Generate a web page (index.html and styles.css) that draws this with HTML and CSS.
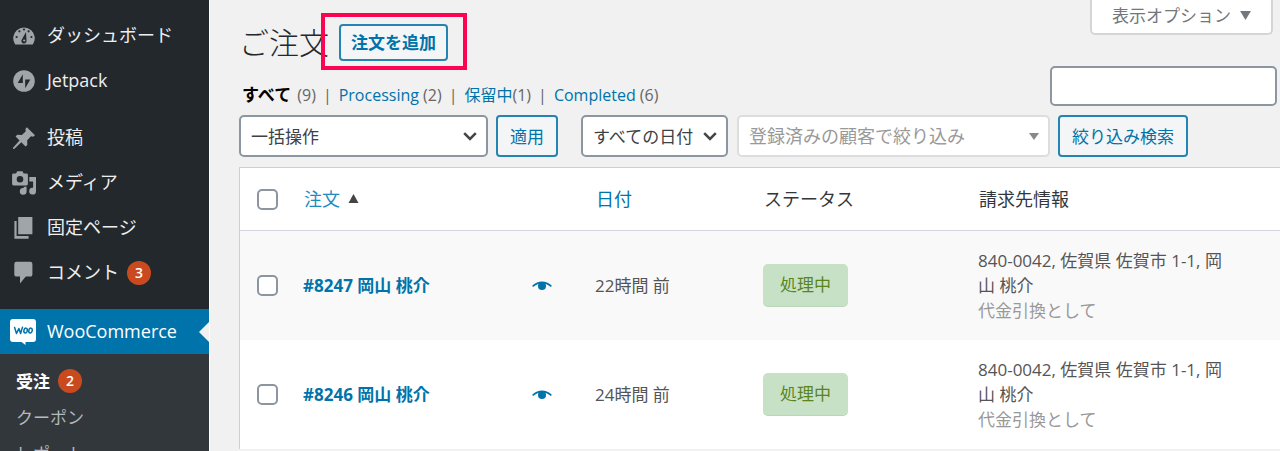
FILE: index.html
```html
<!DOCTYPE html>
<html lang="ja">
<head>
<meta charset="utf-8">
<meta name="viewport" content="width=device-width, initial-scale=1">
<title>ご注文</title>
<link rel="stylesheet" href="styles.css">
</head>
<body>
<div class="layout">
  <nav class="sidebar" aria-label="管理メニュー">
    <ul class="menu">
      <li><a class="menu-link" href="#"><svg class="icon" viewBox="0 0 24 24"><path fill="currentColor" fill-rule="evenodd" d="M3.200 20.500A10.800 10.800 0 1 1 20.800 20.500Z"/><g fill="#23282d"><circle cx="12" cy="5.500" r="1.100"/><circle cx="7.400" cy="7.300" r="1.100"/><circle cx="16.600" cy="7.300" r="1.100"/><circle cx="4.600" cy="13" r="1.100"/><circle cx="19.400" cy="13" r="1.100"/><path d="M14 8 14.500 16.300A2.600 2.600 0 1 1 10 15.200Z"/></g><circle cx="12.200" cy="16.500" r="1.100" fill="currentColor"/></svg><span>ダッシュボード</span></a></li>
      <li><a class="menu-link" href="#"><svg class="icon" viewBox="0 0 24 24"><circle cx="12" cy="12" r="10.800" fill="currentColor"/><path fill="#23282d" d="M10.800 5.200V13.900H5.700ZM13.200 10.400H18.300L13.200 19.300Z"/></svg><span>Jetpack</span></a></li>
      <li class="group-start"><a class="menu-link" href="#"><svg class="icon" viewBox="0 0 24 24"><path fill="currentColor" d="M14.900 1.200 23 9.200 21.200 10.700 19 10.300 15.200 14.200 15.300 18.900 13.500 20.400 9.300 16.300 2.200 23 .8 22.800 1.200 21.400 7.500 14.400 3.600 10.500 5.200 8.800 9.900 8.900 13.800 5.200 13.400 2.900Z"/></svg><span>投稿</span></a></li>
      <li><a class="menu-link" href="#"><svg class="icon" viewBox="0 0 24 24"><path fill="currentColor" fill-rule="evenodd" d="M1.500 2.500H4L5.200.3H10.500L11.700 2.500H14.500A1.400 1.400 0 0 1 15.900 3.900V13A1.400 1.400 0 0 1 14.500 14.400H1.500A1.400 1.400 0 0 1 .1 13V3.900A1.400 1.400 0 0 1 1.500 2.500ZM8 5A3.300 3.300 0 1 0 8 11.600 3.300 3.300 0 0 0 8 5Z"/><path fill="currentColor" d="M17.300 6H24V20.200A3.400 3.400 0 1 1 21.100 16.800V10.500H17.300ZM14.600 15.800V20.300A3.400 3.400 0 1 1 11.700 17V15.800Z"/></svg><span>メディア</span></a></li>
      <li><a class="menu-link" href="#"><svg class="icon" viewBox="0 0 24 24"><path fill="currentColor" d="M6.200 1H20.400V18.300H6.200ZM2.400 5H4.600V20.100H16.600V22.700H2.400Z"/></svg><span>固定ページ</span></a></li>
      <li><a class="menu-link" href="#"><svg class="icon" viewBox="0 0 24 24"><path fill="currentColor" d="M4.500.8H18.200A2.200 2.200 0 0 1 20.400 3V13.400A2.200 2.200 0 0 1 18.200 15.600H13.800L8 22.500V15.600H4.500A2.200 2.200 0 0 1 2.300 13.400V3A2.200 2.200 0 0 1 4.500.8Z"/></svg><span>コメント</span><span class="count">3</span></a></li>
      <li class="group-start current"><a class="menu-link" href="#"><svg class="icon woo" viewBox="0 0 26 26"><path fill="#fff" d="M3 0H23A3 3 0 0 1 26 3V20A3 3 0 0 1 23 23H15.500V26L11.500 23H3A3 3 0 0 1 0 20V3A3 3 0 0 1 3 0Z"/><g fill="none" stroke="#0073aa" stroke-width="1.500" stroke-linejoin="round" stroke-linecap="round"><path d="M4.600 8.500 6.500 14.500 8.900 9.500 10.600 14.500Q11.500 11 12.500 8.200"/><ellipse cx="15.600" cy="11.600" rx="1.700" ry="2.500" transform="rotate(12 15.600 11.600)"/><ellipse cx="20.500" cy="11.600" rx="1.700" ry="2.500" transform="rotate(12 20.500 11.600)"/></g></svg><span>WooCommerce</span></a>
        <ul class="submenu">
          <li><a class="submenu-link active" href="#">受注<span class="count">2</span></a></li>
          <li><a class="submenu-link" href="#">クーポン</a></li>
          <li><a class="submenu-link" href="#">レポート</a></li>
        </ul>
      </li>
    </ul>
  </nav>

  <main class="content">
    <header class="page-head">
      <div class="title-group">
        <h1>ご注文</h1>
        <span class="highlight"><button class="button add" type="button">注文を追加</button></span>
      </div>
      <button class="screen-options" type="button">表示オプション<svg class="triangle" viewBox="0 0 12 10"><path fill="currentColor" d="M0 0H12L6 10Z"/></svg></button>
    </header>

    <div class="views-row">
      <ul class="views">
        <li><a class="selected" href="#">すべて</a> (9)</li>
        <li><a href="#">Processing</a> (2)</li>
        <li><a href="#">保留中</a>(1)</li>
        <li><a href="#">Completed</a> (6)</li>
      </ul>
      <input class="search" type="search" aria-label="注文を検索">
    </div>

    <form class="filters">
      <span class="select bulk"><select aria-label="一括操作"><option>一括操作</option></select><svg class="chevron" viewBox="0 0 14 9"><path d="M1.200 1.200 7 7 12.800 1.200"/></svg></span>
      <button class="button" type="button">適用</button>
      <span class="select date"><select aria-label="日付で絞り込み"><option>すべての日付</option></select><svg class="chevron" viewBox="0 0 14 9"><path d="M1.200 1.200 7 7 12.800 1.200"/></svg></span>
      <span class="select customer"><select aria-label="顧客で絞り込み"><option>登録済みの顧客で絞り込み</option></select><svg class="arrow" viewBox="0 0 10 7"><path fill="#888" d="M0 0H10L5 7Z"/></svg></span>
      <button class="button" type="button">絞り込み検索</button>
    </form>

    <table class="orders">
      <colgroup><col class="col-check"><col class="col-order"><col class="col-date"><col class="col-status"><col class="col-billing"><col></colgroup>
      <thead>
        <tr>
          <th class="check"><input type="checkbox" aria-label="すべて選択"></th>
          <th><a class="sorted" href="#">注文<svg class="sort" viewBox="0 0 10 9"><path fill="#444" d="M5 0 10 9H0Z"/></svg></a></th>
          <th><a href="#">日付</a></th>
          <th>ステータス</th>
          <th>請求先情報</th>
          <th></th>
        </tr>
      </thead>
      <tbody>
        <tr>
          <td class="check"><input type="checkbox" aria-label="#8247 を選択"></td>
          <td><div class="order"><a href="#">#8247 岡山 桃介</a><button class="preview" type="button" aria-label="プレビュー"><svg viewBox="0 0 20 10"><path fill="none" stroke="currentColor" stroke-width="1.500" d="M.6 5.400Q10-2.600 19.400 5.400"/><circle cx="10" cy="5" r="4" fill="currentColor"/></svg></button></div></td>
          <td>22時間 前</td>
          <td><mark class="status">処理中</mark></td>
          <td>840-0042, 佐賀県 佐賀市 1-1, 岡山 桃介<span class="payment">代金引換として</span></td>
          <td></td>
        </tr>
        <tr>
          <td class="check"><input type="checkbox" aria-label="#8246 を選択"></td>
          <td><div class="order"><a href="#">#8246 岡山 桃介</a><button class="preview" type="button" aria-label="プレビュー"><svg viewBox="0 0 20 10"><path fill="none" stroke="currentColor" stroke-width="1.500" d="M.6 5.400Q10-2.600 19.400 5.400"/><circle cx="10" cy="5" r="4" fill="currentColor"/></svg></button></div></td>
          <td>24時間 前</td>
          <td><mark class="status">処理中</mark></td>
          <td>840-0042, 佐賀県 佐賀市 1-1, 岡山 桃介<span class="payment">代金引換として</span></td>
          <td></td>
        </tr>
      </tbody>
    </table>
  </main>
</div>
</body>
</html>
```
FILE: styles.css
```css
* { box-sizing: border-box; }

html { height: 100%; overflow: hidden; }

body {
  height: 100%;
  margin: 0;
  overflow: hidden;
  background: #f1f1f1;
  color: #555;
  font-family: "Open Sans", "Noto Sans CJK JP", sans-serif;
  font-size: 17px;
  line-height: 25px;
}

a { color: #0073aa; text-decoration: none; }
ul { margin: 0; padding: 0; list-style: none; }
button, input, select { margin: 0; font: inherit; }

.layout { display: flex; height: 100%; }

/* Sidebar */
.sidebar {
  flex: 0 0 210px;
  padding-top: 13px;
  overflow: hidden;
  border-right: 1px solid #fff;
  background: #23282d;
}

.menu-link {
  display: flex;
  align-items: center;
  height: 45px;
  padding-left: 12px;
  color: #eee;
  font-size: 18px;
}

.icon {
  width: 24px;
  height: 24px;
  margin-right: 11px;
  color: #a0a5aa;
}

.icon.woo { width: 26px; height: 26px; margin: 0 11px 0 -2px; }
.group-start { margin-top: 12px; }
.group-start.current { margin-top: 14px; }

.count {
  width: 24px;
  height: 24px;
  margin-left: 8px;
  border-radius: 50%;
  background: #ca4a1f;
  color: #fff;
  font-size: 14px;
  font-weight: 600;
  line-height: 24px;
  text-align: center;
}

.current > .menu-link {
  position: relative;
  background: #0073aa;
  color: #fff;
}

.current > .menu-link::after {
  content: "";
  position: absolute;
  top: 50%;
  right: 0;
  margin-top: -10px;
  border: 10px solid transparent;
  border-left: 0;
  border-right-color: #f1f1f1;
}

.submenu { padding: 9px 0; background: #32373c; }

.submenu-link {
  display: flex;
  align-items: center;
  height: 36px;
  padding-left: 16px;
  color: #b4b9be;
}

.submenu-link.active { color: #fff; font-weight: 700; }

/* Page header */
.content { flex: 1; min-width: 0; padding-left: 29px; }

.page-head {
  display: flex;
  align-items: flex-start;
  justify-content: space-between;
  height: 66px;
  padding-right: 7px;
}

.title-group { display: flex; align-items: center; padding-top: 24px; }

h1 {
  margin: 0 10px 0 0;
  color: #23282d;
  font-size: 30px;
  font-weight: 300;
  line-height: 36px;
}

.button {
  height: 42px;
  padding: 0 12px;
  border: 2px solid #2484b4;
  border-radius: 4px;
  background: #f3f5f6;
  color: #0073aa;
  white-space: nowrap;
}

.button.add { height: 37px; padding: 0 10px; font-weight: 700; }

.highlight { position: relative; display: flex; }

.highlight::after {
  content: "";
  position: absolute;
  inset: -11px -19px -9px -18px;
  border: 4px solid #fb0552;
  pointer-events: none;
}

.screen-options {
  display: flex;
  align-items: center;
  height: 35px;
  padding: 0 20px 2px;
  border: 2px solid #d3d6d9;
  border-top: 0;
  border-radius: 0 0 5px 5px;
  background: #fff;
  color: #72777c;
}

.triangle { width: 11px; height: 9px; margin-left: 9px; }

/* Views and search */
.views-row {
  display: flex;
  align-items: flex-end;
  justify-content: space-between;
  padding-right: 3px;
}

.views { display: flex; padding-left: 3px; font-size: 16px; line-height: 22px; }
.views li { color: #666; white-space: nowrap; }
.views li + li::before { content: "|"; margin: 0 7px; color: #666; }
.views .selected { margin-right: 2px; color: #000; font-size: 17px; font-weight: 700; }

.search {
  width: 227px;
  height: 40px;
  padding: 0 10px;
  border: 2px solid #8c96a0;
  border-radius: 5px;
  background: #fff;
}

/* Filters */
.filters { display: flex; margin: 9px 0 10px; }
.select { position: relative; margin-right: 8px; }

.select select {
  width: 100%;
  height: 42px;
  padding: 0 10px;
  appearance: none;
  border: 2px solid #8c96a0;
  border-radius: 5px;
  background: #fff;
  color: #3c4146;
}

.select svg { position: absolute; pointer-events: none; }
.chevron { top: 17px; right: 11px; width: 14px; height: 9px; fill: none; stroke: #444; stroke-width: 2.5; }
.arrow { top: 18px; right: 11px; width: 10px; height: 7px; }
.bulk { width: 249px; }
.date { width: 147px; margin: 0 9px 0 23px; }
.customer { width: 313px; }
.customer select { border-color: #ddd; color: #999; font-size: 18px; }

/* Orders table */
.orders {
  width: 100%;
  table-layout: fixed;
  border-collapse: separate;
  border-spacing: 0;
  border: solid #ccd0d4;
  border-width: 1px 0 0 1px;
  background: #fff;
}

.col-check { width: 46px; }
.col-order { width: 292px; }
.col-date { width: 168px; }
.col-status { width: 215px; }
.col-billing { width: 291px; }

th {
  height: 63px;
  padding: 0 18px;
  border-bottom: 1px solid #d2d5d9;
  color: #32373c;
  font-size: 18px;
  font-weight: 400;
  text-align: left;
}

td { height: 109px; padding: 16px 17px; vertical-align: middle; }
tbody tr:nth-child(odd) { background: #f9f9f9; }

.check { padding: 0 0 0 17px; line-height: 0; }

.check input {
  width: 21px;
  height: 21px;
  appearance: none;
  border: 2px solid #8c96a0;
  border-radius: 5px;
  background: #fff;
}

.sorted { color: #1e8cbe; }
.sort { width: 11px; height: 9px; margin-left: 8px; vertical-align: 3px; }

.order { display: flex; align-items: center; justify-content: space-between; font-weight: 700; }

.preview {
  display: flex;
  margin-right: 9px;
  padding: 0;
  border: 0;
  background: none;
  color: #0073aa;
}

.preview svg { width: 20px; height: 10px; }

.status {
  display: inline-block;
  height: 43px;
  padding: 0 17px;
  border-bottom: 1px solid #b9d6b9;
  border-radius: 5px;
  background: #c6e1c6;
  color: #5b841b;
  line-height: 42px;
  vertical-align: middle;
}

.payment { display: block; color: #999; }
```
